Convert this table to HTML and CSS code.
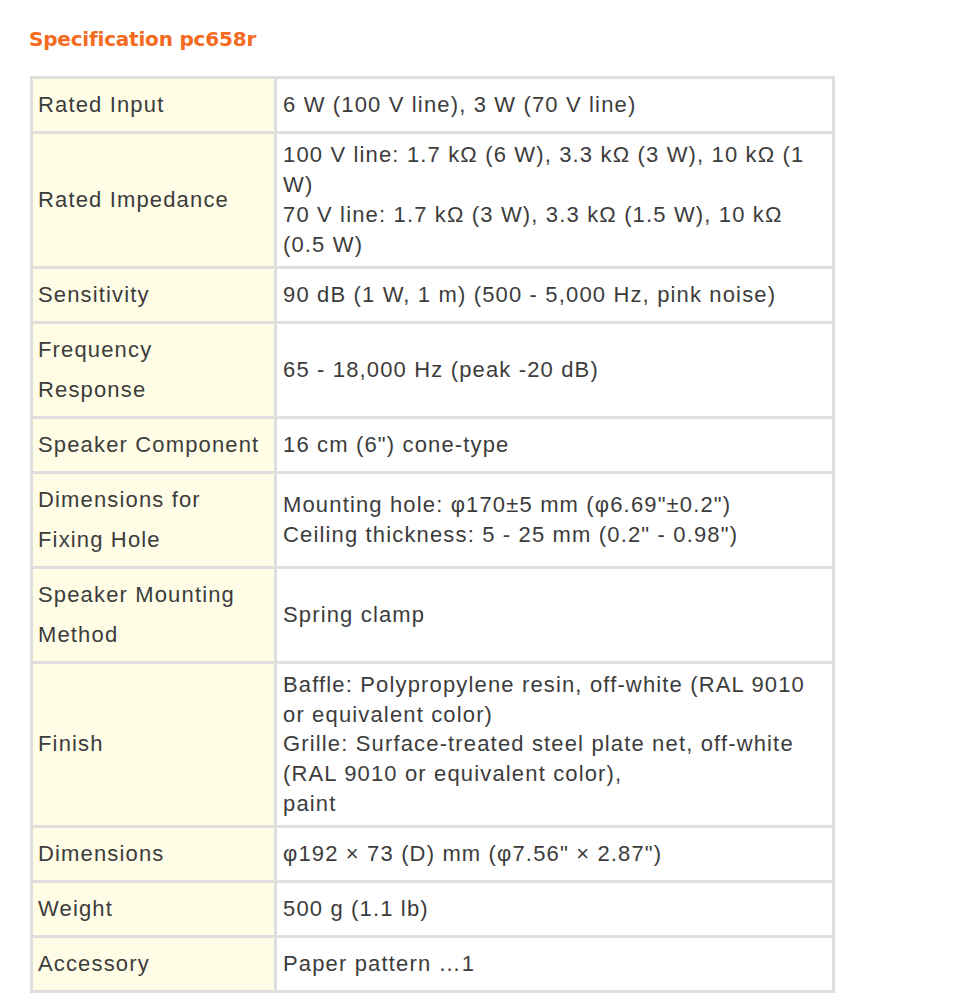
FILE: index.html
```html
<!DOCTYPE html>
<html lang="en">
<head>
<meta charset="utf-8">
<title>Specification pc658r</title>
<link rel="stylesheet" href="styles.css">
</head>
<body>
<div class="page">
  <h2 class="spec-title">Specification pc658r</h2>
  <table class="spec-table">
    <tbody>
      <tr><th>Rated Input</th><td>6 W (100 V line), 3 W (70 V line)</td></tr>
      <tr><th>Rated Impedance</th><td>100 V line: 1.7 kΩ (6 W), 3.3 kΩ (3 W), 10 kΩ (1 W)<br>70 V line: 1.7 kΩ (3 W), 3.3 kΩ (1.5 W), 10 kΩ (0.5 W)</td></tr>
      <tr><th>Sensitivity</th><td>90 dB (1 W, 1 m) (500 - 5,000 Hz, pink noise)</td></tr>
      <tr><th>Frequency Response</th><td>65 - 18,000 Hz (peak -20 dB)</td></tr>
      <tr><th>Speaker Component</th><td>16 cm (6") cone-type</td></tr>
      <tr><th>Dimensions for Fixing Hole</th><td>Mounting hole: φ170±5 mm (φ6.69"±0.2")<br>Ceiling thickness: 5 - 25 mm (0.2" - 0.98")</td></tr>
      <tr><th>Speaker Mounting Method</th><td>Spring clamp</td></tr>
      <tr><th>Finish</th><td>Baffle: Polypropylene resin, off-white (RAL 9010 or equivalent color)<br>Grille: Surface-treated steel plate net, off-white (RAL 9010 or equivalent color),<br>paint</td></tr>
      <tr><th>Dimensions</th><td>φ192 × 73 (D) mm (φ7.56" × 2.87")</td></tr>
      <tr><th>Weight</th><td>500 g (1.1 lb)</td></tr>
      <tr><th>Accessory</th><td>Paper pattern …1</td></tr>
    </tbody>
  </table>
</div>
</body>
</html>
```

FILE: styles.css
```css
html, body {
  margin: 0;
  padding: 0;
  background: #ffffff;
}

.page {
  padding: 26px 0 0 29px;
}

.spec-title {
  margin: 0 0 24px 0;
  font-family: "DejaVu Sans", Verdana, sans-serif;
  font-weight: bold;
  font-size: 20px;
  line-height: 26px;
  letter-spacing: -0.2px;
  color: #f46a1e;
}

.spec-table {
  border-collapse: collapse;
  width: 805px;
  margin-left: 1px;
  font-family: "Liberation Sans", Arial, sans-serif;
  font-size: 22px;
  letter-spacing: 1.15px;
  color: #3c3c3c;
}

.spec-table th,
.spec-table td {
  border: 3px solid #dedede;
  padding: 6px;
  vertical-align: middle;
  text-align: left;
  font-weight: normal;
}

.spec-table th {
  width: 224px;
  background: #fffde6;
  line-height: 40px;
  padding-left: 5px;
  padding-right: 12px;
}

.spec-table td {
  background: #ffffff;
  line-height: 29.9px;
  padding-left: 6px;
}
```
